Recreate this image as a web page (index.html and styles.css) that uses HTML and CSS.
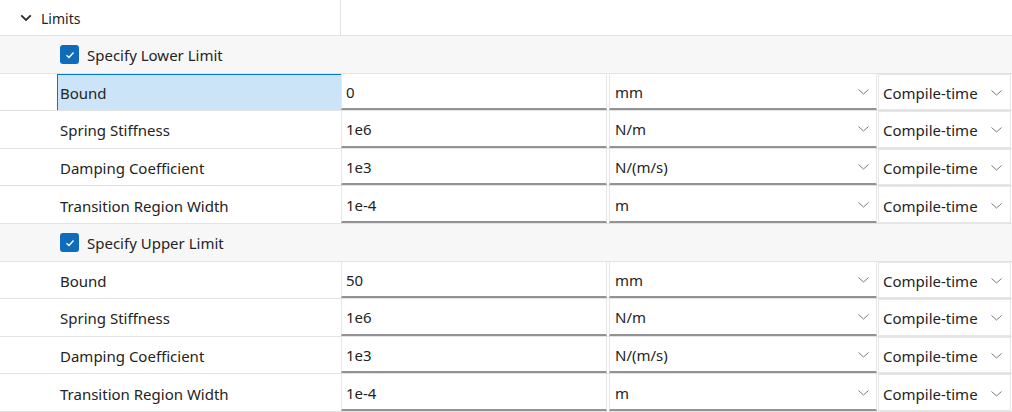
FILE: index.html
```html
<!DOCTYPE html>
<html>
<head>
<meta charset="utf-8">
<link rel="stylesheet" href="styles.css">
</head>
<body>
<div class="panel">
  <div class="row header">
    <div class="hcell">
      <svg class="expand" width="12" height="8" viewBox="0 0 12 8"><path d="M1.2 1.3 L6 6 L10.8 1.3" fill="none" stroke="#2b2b2b" stroke-width="1.8"/></svg>
      <span>Limits</span>
    </div>
    <div class="hrest"></div>
  </div>

  <div class="row group">
    <span class="check"><svg width="12" height="10" viewBox="0 0 12 10"><path d="M2.5 5.2 L5 7.5 L9.5 2.5" fill="none" stroke="#fff" stroke-width="1.4"/></svg></span>
    <span>Specify Lower Limit</span>
  </div>

  <div class="row param">
    <div class="label selected">Bound</div>
    <div class="value">0</div>
    <div class="unit"><span>mm</span><svg class="dd" width="11" height="6" viewBox="0 0 11 6"><path d="M0.5 0.5 L5.5 5 L10.5 0.5" fill="none" stroke="#7a7a7a" stroke-width="1"/></svg></div>
    <div class="mode"><span>Compile-time</span><svg class="dd" width="11" height="6" viewBox="0 0 11 6"><path d="M0.5 0.5 L5.5 5 L10.5 0.5" fill="none" stroke="#7a7a7a" stroke-width="1"/></svg></div>
  </div>
  <div class="row param">
    <div class="label">Spring Stiffness</div>
    <div class="value">1e6</div>
    <div class="unit"><span>N/m</span><svg class="dd" width="11" height="6" viewBox="0 0 11 6"><path d="M0.5 0.5 L5.5 5 L10.5 0.5" fill="none" stroke="#7a7a7a" stroke-width="1"/></svg></div>
    <div class="mode"><span>Compile-time</span><svg class="dd" width="11" height="6" viewBox="0 0 11 6"><path d="M0.5 0.5 L5.5 5 L10.5 0.5" fill="none" stroke="#7a7a7a" stroke-width="1"/></svg></div>
  </div>
  <div class="row param">
    <div class="label">Damping Coefficient</div>
    <div class="value">1e3</div>
    <div class="unit"><span>N/(m/s)</span><svg class="dd" width="11" height="6" viewBox="0 0 11 6"><path d="M0.5 0.5 L5.5 5 L10.5 0.5" fill="none" stroke="#7a7a7a" stroke-width="1"/></svg></div>
    <div class="mode"><span>Compile-time</span><svg class="dd" width="11" height="6" viewBox="0 0 11 6"><path d="M0.5 0.5 L5.5 5 L10.5 0.5" fill="none" stroke="#7a7a7a" stroke-width="1"/></svg></div>
  </div>
  <div class="row param">
    <div class="label">Transition Region Width</div>
    <div class="value">1e-4</div>
    <div class="unit"><span>m</span><svg class="dd" width="11" height="6" viewBox="0 0 11 6"><path d="M0.5 0.5 L5.5 5 L10.5 0.5" fill="none" stroke="#7a7a7a" stroke-width="1"/></svg></div>
    <div class="mode"><span>Compile-time</span><svg class="dd" width="11" height="6" viewBox="0 0 11 6"><path d="M0.5 0.5 L5.5 5 L10.5 0.5" fill="none" stroke="#7a7a7a" stroke-width="1"/></svg></div>
  </div>

  <div class="row group">
    <span class="check"><svg width="12" height="10" viewBox="0 0 12 10"><path d="M2.5 5.2 L5 7.5 L9.5 2.5" fill="none" stroke="#fff" stroke-width="1.4"/></svg></span>
    <span>Specify Upper Limit</span>
  </div>

  <div class="row param">
    <div class="label">Bound</div>
    <div class="value">50</div>
    <div class="unit"><span>mm</span><svg class="dd" width="11" height="6" viewBox="0 0 11 6"><path d="M0.5 0.5 L5.5 5 L10.5 0.5" fill="none" stroke="#7a7a7a" stroke-width="1"/></svg></div>
    <div class="mode"><span>Compile-time</span><svg class="dd" width="11" height="6" viewBox="0 0 11 6"><path d="M0.5 0.5 L5.5 5 L10.5 0.5" fill="none" stroke="#7a7a7a" stroke-width="1"/></svg></div>
  </div>
  <div class="row param">
    <div class="label">Spring Stiffness</div>
    <div class="value">1e6</div>
    <div class="unit"><span>N/m</span><svg class="dd" width="11" height="6" viewBox="0 0 11 6"><path d="M0.5 0.5 L5.5 5 L10.5 0.5" fill="none" stroke="#7a7a7a" stroke-width="1"/></svg></div>
    <div class="mode"><span>Compile-time</span><svg class="dd" width="11" height="6" viewBox="0 0 11 6"><path d="M0.5 0.5 L5.5 5 L10.5 0.5" fill="none" stroke="#7a7a7a" stroke-width="1"/></svg></div>
  </div>
  <div class="row param">
    <div class="label">Damping Coefficient</div>
    <div class="value">1e3</div>
    <div class="unit"><span>N/(m/s)</span><svg class="dd" width="11" height="6" viewBox="0 0 11 6"><path d="M0.5 0.5 L5.5 5 L10.5 0.5" fill="none" stroke="#7a7a7a" stroke-width="1"/></svg></div>
    <div class="mode"><span>Compile-time</span><svg class="dd" width="11" height="6" viewBox="0 0 11 6"><path d="M0.5 0.5 L5.5 5 L10.5 0.5" fill="none" stroke="#7a7a7a" stroke-width="1"/></svg></div>
  </div>
  <div class="row param">
    <div class="label">Transition Region Width</div>
    <div class="value">1e-4</div>
    <div class="unit"><span>m</span><svg class="dd" width="11" height="6" viewBox="0 0 11 6"><path d="M0.5 0.5 L5.5 5 L10.5 0.5" fill="none" stroke="#7a7a7a" stroke-width="1"/></svg></div>
    <div class="mode"><span>Compile-time</span><svg class="dd" width="11" height="6" viewBox="0 0 11 6"><path d="M0.5 0.5 L5.5 5 L10.5 0.5" fill="none" stroke="#7a7a7a" stroke-width="1"/></svg></div>
  </div>
</div>
</body>
</html>
```

FILE: styles.css
```css
* { box-sizing: border-box; }
html, body { margin: 0; padding: 0; background: #ffffff; }
body {
  font-family: "Noto Sans", "Open Sans", sans-serif;
  font-size: 15px;
  color: #242424;
  width: 1012px;
  height: 412px;
  overflow: hidden;
}
.panel { display: flex; flex-direction: column; }
.row {
  height: 37.6px;
  border-bottom: 1px solid #e3e3e3;
  display: flex;
  align-items: center;
}
.header { height: 36px; background: #ffffff; align-items: stretch; }
.hcell {
  width: 341px;
  border-right: 1px solid #e3e3e3;
  display: flex;
  align-items: center;
  font-size: 14px;
  padding-top: 1px;
}
.expand { margin-left: 20px; margin-right: 9px; }
.hrest { flex: 1; }
.group { background: #f7f7f7; padding-left: 60px; padding-top: 1px; }
.check {
  width: 19px; height: 19px;
  background: #0f6cbd;
  border-radius: 3px;
  display: inline-flex;
  align-items: center;
  justify-content: center;
  margin-right: 8px;
}
.param { background: #ffffff; align-items: stretch; }
.label {
  width: 341px;
  padding-left: 60px;
  display: flex;
  align-items: center;
  padding-top: 2px;
}
.label.selected {
  margin-left: 57px;
  padding-left: 2px;
  width: 284px;
  background: #cce4f7;
  border-left: 1px solid #0078d4;
  border-top: 1px solid #0078d4;
}
.value, .unit, .mode {
  display: flex;
  align-items: center;
  background: #ffffff;
  border: 1px solid #e6e6e6;
  border-top: none;
  padding-top: 2px;
}
.value {
  width: 266px;
  padding-left: 4px;
  border-bottom: 2px solid #939393;
}
.unit {
  width: 268px;
  margin-left: 2px;
  padding-left: 5px;
  padding-right: 7px;
  justify-content: space-between;
  border-bottom: 2px solid #939393;
}
.mode {
  width: 133px;
  margin-left: 1px;
  padding-left: 4px;
  padding-right: 8px;
  justify-content: space-between;
  border-top: 1px solid #e6e6e6;
}
.dd { flex: none; }
```
